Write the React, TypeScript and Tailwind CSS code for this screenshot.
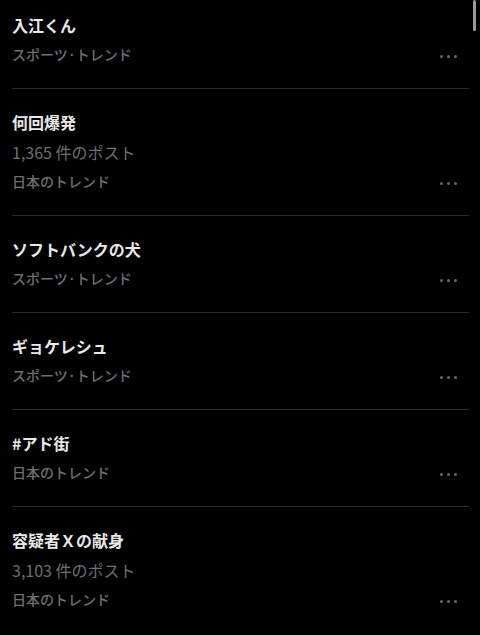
const trends = [
  { title: "入江くん", lines: [], category: "スポーツ·トレンド", first: true },
  { title: "何回爆発", lines: ["1,365 件のポスト"], category: "日本のトレンド" },
  { title: "ソフトバンクの犬", lines: [], category: "スポーツ·トレンド" },
  { title: "ギョケレシュ", lines: [], category: "スポーツ·トレンド" },
  { title: "#アド街", lines: [], category: "日本のトレンド" },
  { title: "容疑者Ｘの献身", lines: ["3,103 件のポスト"], category: "日本のトレンド" },
];

function Dots() {
  return (
    <div className="flex items-center gap-[4px] pr-[12px] mt-[3px]">
      <span className="w-[3px] h-[3px] rounded-full bg-[#69696b]" />
      <span className="w-[3px] h-[3px] rounded-full bg-[#69696b]" />
      <span className="w-[3px] h-[3px] rounded-full bg-[#69696b]" />
    </div>
  );
}

export default function App() {
  return (
    <div
      className="relative w-[480px] h-[635px] overflow-hidden bg-black"
      style={{ fontFamily: '"Noto Sans CJK JP", "Noto Sans", sans-serif' }}
    >
      <div className="pl-[12px] pr-[11px]">
        {trends.map((t, i) => (
          <div
            key={i}
            className={`${t.first ? "pt-[10px]" : "pt-[18px]"} pb-[19px] ${
              i < trends.length - 1 ? "border-b border-[#2a2a2c]" : ""
            }`}
          >
            <div className="text-[16px] leading-[30px] font-bold text-[#e8e8e8]">{t.title}</div>
            {t.lines.map((l) => (
              <div key={l} className="text-[16px] leading-[30px] text-[#6f6f72]">
                {l}
              </div>
            ))}
            <div className="flex items-center justify-between">
              <div className="text-[14px] leading-[29px] font-medium text-[#6f6f72]">{t.category}</div>
              <Dots />
            </div>
          </div>
        ))}
      </div>
      {/* scrollbar thumb */}
      <div className="absolute right-[4px] top-0 w-[3px] h-[31px] rounded-full bg-[#9a9a9a]" />
    </div>
  );
}
